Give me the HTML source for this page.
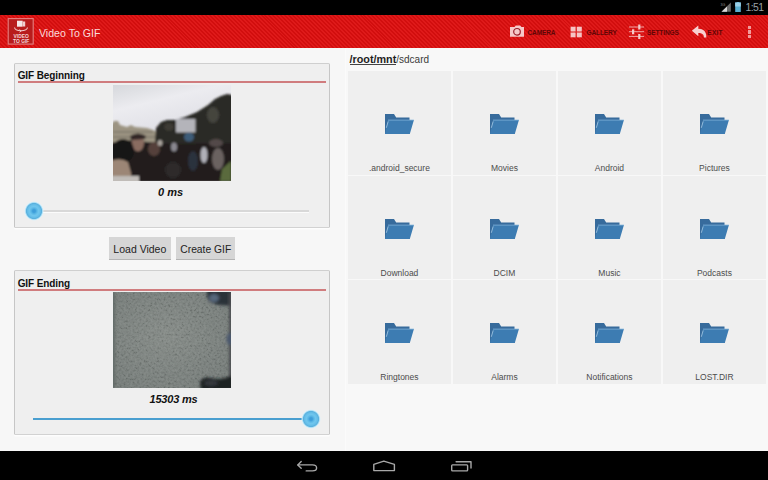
<!DOCTYPE html>
<html><head><meta charset="utf-8">
<style>
*{margin:0;padding:0;box-sizing:border-box}
html,body{width:768px;height:480px;overflow:hidden;background:#f7f7f7;font-family:"Liberation Sans",sans-serif}
.abs{position:absolute}
#status{left:0;top:0;width:768px;height:15px;background:#000}
#abar{left:0;top:15px;width:768px;height:33px;background:#d81414;
 background-image:repeating-linear-gradient(45deg,#d20e0e 0,#d20e0e 1.4px,#df1a1a 1.4px,#df1a1a 2.8px)}
#nav{left:0;top:451.2px;width:768px;height:28.8px;background:#000}
#left{left:0;top:48px;width:345px;height:403.2px;background:#f7f7f7}
#right{left:345px;top:48px;width:423px;height:403.2px;background:#f8f8f8;border-left:1px solid #fbfbfb}
.card{left:14.2px;width:315.5px;background:#efefef;border:1px solid #c6c6c6;border-top-color:#cfcfcf;border-bottom:1.6px solid #d2d2d2;border-radius:1.5px;box-shadow:0 1.5px 0 #fdfdfd}
.ctitle{position:absolute;left:3px;font-weight:bold;font-size:10px;color:#111;letter-spacing:-0.1px}
.cline{position:absolute;left:3px;right:3px;height:2px;background:#c9696b}
.ms{position:absolute;left:0;right:0;text-align:center;font-weight:bold;font-style:italic;font-size:11px;color:#111}
.btn{top:237px;height:23px;background:#d6d6d6;border-bottom:1.2px solid #b4b4b4;font-size:10.5px;color:#222;text-align:center;line-height:25px}
.cell{width:103.9px;height:103.5px;background:#efefef}
.lbl{position:absolute;left:0;right:0;top:92px;text-align:center;font-size:8.5px;color:#4c4c4c}
.fold{position:absolute;left:37.5px;top:43px}
.act{color:#5e0606;font-weight:bold;font-size:6.5px;top:29px;letter-spacing:-0.1px}
</style></head><body>
<div id="status" class="abs"></div>
<div id="abar" class="abs"></div>
<div id="left" class="abs"></div>
<div id="right" class="abs"></div>

<div class="card abs" style="top:63.2px;height:164.4px"></div>
<div class="abs ctitle" style="left:17.7px;top:70px">GIF Beginning</div>
<div class="abs" style="left:18px;top:81px;width:308px;height:1.7px;background:#d07c7e"></div>
<svg class="abs" style="left:113px;top:85px" width="118" height="96" viewBox="0 0 118 96" preserveAspectRatio="none">
<defs>
<linearGradient id="sky" x1="0" y1="0" x2="0.3" y2="1"><stop offset="0" stop-color="#d6d8dc"/><stop offset="0.25" stop-color="#ececf0"/><stop offset="0.55" stop-color="#e0e0e6"/></linearGradient>
<filter id="bl1" x="-10%" y="-10%" width="120%" height="120%"><feGaussianBlur stdDeviation="1.3"/></filter>
<clipPath id="c1"><rect width="118" height="96"/></clipPath>
</defs>
<g clip-path="url(#c1)">
<rect width="118" height="96" fill="url(#sky)"/>
<g filter="url(#bl1)">
<path d="M-2,40 L1,36 L5,36 L7,40 L14,42 L18,40 L22,42 L34,43 L40,45 L46,48 L46,66 L-2,66 Z" fill="#9c9482"/>
<path d="M0,47 H40 M0,52 H44" stroke="#6e685c" stroke-width="1.2"/>
<path d="M42,56 L43,43 L48,37 L54,35 L62,35 L72,32 L84,27 L95,20 L102,14 L108,11 L114,9 L120,10 L120,97 L42,97 Z" fill="#2b2a26"/>
<ellipse cx="100" cy="30" rx="6" ry="8" fill="#44443e"/>
<ellipse cx="56" cy="42" rx="5" ry="4" fill="#3c3b36"/>
<rect x="63" y="34" width="19.5" height="13.5" fill="#b4b4ba"/>
<ellipse cx="76" cy="52" rx="5" ry="4.5" fill="#3e5c78"/>
<path d="M-2,58 L12,55 L46,58 L60,59 L120,58 L120,97 L-2,97 Z" fill="#221e1e"/>
<ellipse cx="25" cy="58" rx="6" ry="8.5" fill="#8a6c60"/>
<path d="M17,51 Q25,46 33,51 L32,54 L18,55 Z" fill="#302626"/>
<ellipse cx="10" cy="66" rx="11" ry="12" fill="#181414"/>
<path d="M-2,76 Q7,72 15,77 L18,88 L18,95 L-2,95 Z" fill="#9c8676"/>
<rect x="-2" y="91" width="28" height="7" fill="#c0bcb8"/>
<ellipse cx="41" cy="64" rx="6" ry="7" fill="#54403a"/>
<ellipse cx="47" cy="58" rx="2.5" ry="3" fill="#a8a29c"/>
<ellipse cx="91" cy="70" rx="3.5" ry="8" fill="#b0b0b8"/>
<ellipse cx="61" cy="62" rx="3" ry="4.5" fill="#8a8890"/>
<ellipse cx="105" cy="74" rx="6" ry="11" fill="#6a6260"/>
<ellipse cx="103" cy="58" rx="7" ry="4" fill="#524a48"/>
<path d="M109,84 L118,76 L118,96 L107,96 Z" fill="#5a6a3c"/>
<ellipse cx="80" cy="76" rx="5" ry="10" fill="#2c303c"/>
<ellipse cx="60" cy="85" rx="8" ry="8" fill="#2e2a2a"/>
</g>
</g>
</svg>
<div class="abs ms" style="left:158px;top:186px;width:auto;right:auto">0 ms</div>
<div class="abs" style="left:33px;top:210px;width:276px;height:1.5px;background:#d8d8d8"></div>
<div class="abs" style="left:33px;top:211.5px;width:276px;height:1.5px;background:#fbfbfb"></div>
<div class="abs" style="left:23.7px;top:201px;width:20px;height:20px;border-radius:50%;background:radial-gradient(circle closest-side,#3a9ad8 0,#42a2dc 1.6px,#5cb8e6 3px,#70c6ee 4.6px,#66bee8 6.4px,#58b0de 7.6px,#a8dcf4 8.4px,rgba(215,242,252,0.7) 9.2px,rgba(220,245,255,0) 10px)"></div>
<div class="abs btn" style="left:108.7px;width:62.3px">Load Video</div>
<div class="abs btn" style="left:175.6px;width:59.3px;font-size:10.3px;line-height:25.5px;padding-left:1px">Create GIF</div>
<div class="card abs" style="top:270px;height:165px"></div>
<div class="abs ctitle" style="left:17.7px;top:277.5px">GIF Ending</div>
<div class="abs" style="left:18px;top:288.9px;width:308px;height:1.7px;background:#d07c7e"></div>
<svg class="abs" style="left:113px;top:292px" width="118" height="96" viewBox="0 0 118 96">
<defs>
<radialGradient id="cg" cx="0.45" cy="0.45" r="0.75"><stop offset="0" stop-color="#828884"/><stop offset="1" stop-color="#6f7673"/></radialGradient>
<filter id="bl2" x="-10%" y="-10%" width="120%" height="120%"><feGaussianBlur stdDeviation="1.4"/></filter>
<filter id="nz"><feTurbulence type="fractalNoise" baseFrequency="0.45" numOctaves="2" seed="7"/><feColorMatrix type="matrix" values="2 0 0 0 -0.5  2 0 0 0 -0.5  2 0 0 0 -0.5  0 0 0 0 1"/></filter>
<clipPath id="c2"><rect width="118" height="96"/></clipPath>
</defs>
<g clip-path="url(#c2)">
<rect width="118" height="96" fill="url(#cg)"/>
<rect width="118" height="96" filter="url(#nz)" opacity="0.1"/>
<g filter="url(#bl2)">
<rect x="-3" y="0" width="5" height="96" fill="#626a68"/>
<path d="M94,-2 L120,-2 L120,14 L106,13 Q95,11 94,5 Z" fill="#2a3039"/>
<ellipse cx="101" cy="6" rx="5" ry="4" fill="#56687c"/>
<rect x="116" y="0" width="4" height="96" fill="#484c50"/>
<ellipse cx="117" cy="47" rx="3.5" ry="6" fill="#4a566c"/>
<path d="M87,90 Q90,84 98,86 Q108,89 120,83 L120,98 L88,98 Z" fill="#1c2024"/>
<ellipse cx="98" cy="91" rx="7" ry="3" fill="#34383c"/>
</g>
</g>
</svg>
<div class="abs ms" style="left:149.5px;top:393px;width:auto;right:auto;letter-spacing:-0.2px">15303 ms</div>
<div class="abs" style="left:32.6px;top:417.7px;width:278px;height:2px;background:#4a9fd0"></div>
<div class="abs" style="left:301.2px;top:408.9px;width:20px;height:20px;border-radius:50%;background:radial-gradient(circle closest-side,#3a9ad8 0,#42a2dc 1.6px,#5cb8e6 3px,#70c6ee 4.6px,#66bee8 6.4px,#58b0de 7.6px,#a8dcf4 8.4px,rgba(215,242,252,0.7) 9.2px,rgba(220,245,255,0) 10px)"></div>

<svg width="0" height="0" style="position:absolute"><defs><g id="fd">
<path d="M0,0 H9 L11.2,3.4 H24.5 V20 H0 Z" fill="#376b9c"/>
<path d="M3,6.1 H28.9 L24.8,20 H0 Z" fill="#3d7cb2"/>
<path d="M3,6.1 H28.9" stroke="#80b2da" stroke-width="0.8"/>
<path d="M3.2,7.4 L1.3,13.8" stroke="#a8cbe6" stroke-width="0.8"/>
</g></defs></svg>
<div class="abs" style="left:349.5px;top:63.8px;width:46.5px;height:1px;background:#444"></div>
<div class="abs" style="left:349.5px;top:53px;font-size:10.8px;line-height:12px;white-space:nowrap"><span style="font-weight:bold;color:#1e1e1e;">/root/mnt</span><span style="color:#3a3a3a;font-size:10px">/sdcard</span></div>
<div class="abs cell" style="left:347.5px;top:71.0px"><svg class="fold" width="30" height="21" viewBox="0 0 30 21"><use href="#fd"/></svg><div class="lbl">.android_secure</div></div>
<div class="abs cell" style="left:452.5px;top:71.0px"><svg class="fold" width="30" height="21" viewBox="0 0 30 21"><use href="#fd"/></svg><div class="lbl">Movies</div></div>
<div class="abs cell" style="left:557.5px;top:71.0px"><svg class="fold" width="30" height="21" viewBox="0 0 30 21"><use href="#fd"/></svg><div class="lbl">Android</div></div>
<div class="abs cell" style="left:662.5px;top:71.0px"><svg class="fold" width="30" height="21" viewBox="0 0 30 21"><use href="#fd"/></svg><div class="lbl">Pictures</div></div>
<div class="abs cell" style="left:347.5px;top:175.5px"><svg class="fold" width="30" height="21" viewBox="0 0 30 21"><use href="#fd"/></svg><div class="lbl">Download</div></div>
<div class="abs cell" style="left:452.5px;top:175.5px"><svg class="fold" width="30" height="21" viewBox="0 0 30 21"><use href="#fd"/></svg><div class="lbl">DCIM</div></div>
<div class="abs cell" style="left:557.5px;top:175.5px"><svg class="fold" width="30" height="21" viewBox="0 0 30 21"><use href="#fd"/></svg><div class="lbl">Music</div></div>
<div class="abs cell" style="left:662.5px;top:175.5px"><svg class="fold" width="30" height="21" viewBox="0 0 30 21"><use href="#fd"/></svg><div class="lbl">Podcasts</div></div>
<div class="abs cell" style="left:347.5px;top:280.0px"><svg class="fold" width="30" height="21" viewBox="0 0 30 21"><use href="#fd"/></svg><div class="lbl">Ringtones</div></div>
<div class="abs cell" style="left:452.5px;top:280.0px"><svg class="fold" width="30" height="21" viewBox="0 0 30 21"><use href="#fd"/></svg><div class="lbl">Alarms</div></div>
<div class="abs cell" style="left:557.5px;top:280.0px"><svg class="fold" width="30" height="21" viewBox="0 0 30 21"><use href="#fd"/></svg><div class="lbl">Notifications</div></div>
<div class="abs cell" style="left:662.5px;top:280.0px"><svg class="fold" width="30" height="21" viewBox="0 0 30 21"><use href="#fd"/></svg><div class="lbl">LOST.DIR</div></div>
<div id="nav" class="abs"></div>
<svg class="abs" style="left:7.3px;top:17px" width="28" height="29" viewBox="0 0 28 29">
 <rect x="0.7" y="1" width="26" height="26.7" fill="#b81c1c"/>
 <rect x="1.2" y="1.6" width="25" height="25.5" fill="none" stroke="#e88080" stroke-width="1.1"/>
 <rect x="10" y="3.7" width="5.7" height="6" fill="#f6e6e6"/>
 <rect x="16" y="4.5" width="2.2" height="5" fill="#f0d0d0"/>
 <path d="M7.5,10.5 Q8,13.5 14,13.8 Q20,13.5 20.5,10.5" fill="none" stroke="#f0c8c8" stroke-width="1.1"/>
 <path d="M12.5,12.5 L14.2,14 L12.5,15.3" fill="none" stroke="#f0c8c8" stroke-width="0.9"/>
 <text x="14.2" y="20.9" font-size="4.9" font-weight="bold" fill="#f4d8d8" text-anchor="middle" style="font-family:'Liberation Sans'">VIDEO</text>
 <text x="14.2" y="25.9" font-size="4.9" font-weight="bold" fill="#f4d8d8" text-anchor="middle" style="font-family:'Liberation Sans'">TO GIF</text>
</svg>
<div class="abs" style="left:39px;top:26.5px;font-size:10.6px;line-height:12px;color:#fbdada">Video To GIF</div>

<svg class="abs" style="left:509px;top:24px" width="17" height="14" viewBox="0 0 17 14">
 <path d="M1,3 H5.5 L6.8,1.5 H11.2 L12.5,3 H15 V12.8 H1 Z" fill="#f6c8c8"/>
 <circle cx="8" cy="7.8" r="3.3" fill="none" stroke="#9a1e2a" stroke-width="1.2"/>
</svg>
<div class="abs act" style="left:527.5px">CAMERA</div>
<svg class="abs" style="left:570px;top:26px" width="13" height="12" viewBox="0 0 13 12">
 <rect x="0.6" y="0.7" width="5" height="4.8" fill="#f6c4c4"/>
 <rect x="6.8" y="0.7" width="5" height="4.8" fill="#f6c4c4"/>
 <rect x="0.6" y="6.5" width="5" height="4.8" fill="#f6c4c4"/>
 <rect x="6.8" y="6.5" width="5" height="4.8" fill="#f6c4c4"/>
</svg>
<div class="abs act" style="left:586.5px">GALLERY</div>
<svg class="abs" style="left:628px;top:23px" width="17" height="17" viewBox="0 0 17 17">
 <path d="M1,4 H16 M1,8.7 H16 M1,13.4 H16" stroke="#f2b6b6" stroke-width="0.9"/>
 <rect x="10.2" y="1.5" width="2.2" height="5" fill="#f6c8c8"/>
 <rect x="4" y="6.3" width="2.2" height="5" fill="#f6c8c8"/>
 <rect x="10.2" y="11" width="2.2" height="5" fill="#f6c8c8"/>
</svg>
<div class="abs act" style="left:647px">SETTINGS</div>
<svg class="abs" style="left:691.2px;top:25px" width="16" height="13" viewBox="0.5 0.4 14.2 11.6">
 <path d="M1.2,5.6 L7,0.8 V3.8 C11.5,3.8 14.2,6.2 14.2,11.5 L12,11.5 C12,9.2 10.6,7.6 7,7.6 V10.5 Z" fill="#f8d0d0"/>
</svg>
<div class="abs act" style="left:707.3px;letter-spacing:0.25px">EXIT</div>
<div class="abs" style="left:747.6px;top:25.5px;width:3.4px;height:3.2px;background:#f29c9c"></div>
<div class="abs" style="left:747.6px;top:30.4px;width:3.4px;height:3.2px;background:#f29c9c"></div>
<div class="abs" style="left:747.6px;top:35.3px;width:3.4px;height:3.2px;background:#f29c9c"></div>

<div class="abs" style="left:745.5px;top:1px;font-size:10.4px;line-height:13px;color:#9aa0a6;letter-spacing:-0.6px">1:51</div>
<svg class="abs" style="left:719px;top:1px" width="49" height="13" viewBox="0 0 49 13">
 <path d="M11.8,1.5 V10.8 H2.5 Z" fill="#6a6a6a"/>
 <path d="M8,5.5 V10.8 H2.5 Z" fill="#d8d8d8"/>
 <text x="1.5" y="4.6" font-size="3.6" fill="#8a8a8a" style="font-family:'Liberation Sans'">3G</text>
 <rect x="16.2" y="1.5" width="5.6" height="9.5" fill="#5aaed0"/>
 <rect x="17.8" y="1" width="2.4" height="1" fill="#5aaed0"/>
 <rect x="16.2" y="1.5" width="5.6" height="4" fill="#9acfe6"/>
 
</svg>

<svg class="abs" style="left:290px;top:455px" width="200" height="20" viewBox="0 0 200 20">
 <g fill="none" stroke="#a8a8a8" stroke-width="1.4" stroke-linejoin="round" stroke-linecap="round">
  <path d="M8,9.9 H22.5 C26,9.9 26.6,11 26.6,13 C26.6,15 25.5,15.9 22.5,15.9 H16.2"/>
  <path d="M11.2,6.6 L7.8,9.9 L11.2,13.3"/>
  <path d="M83.8,15.6 V9.4 L93.8,6.1 L104.4,9.4 V15.6 Z"/>
  <rect x="161.7" y="9.9" width="15.9" height="6" rx="0.8"/>
  <path d="M166.1,6.8 H181 V13"/>
 </g>
</svg>

</body></html>
